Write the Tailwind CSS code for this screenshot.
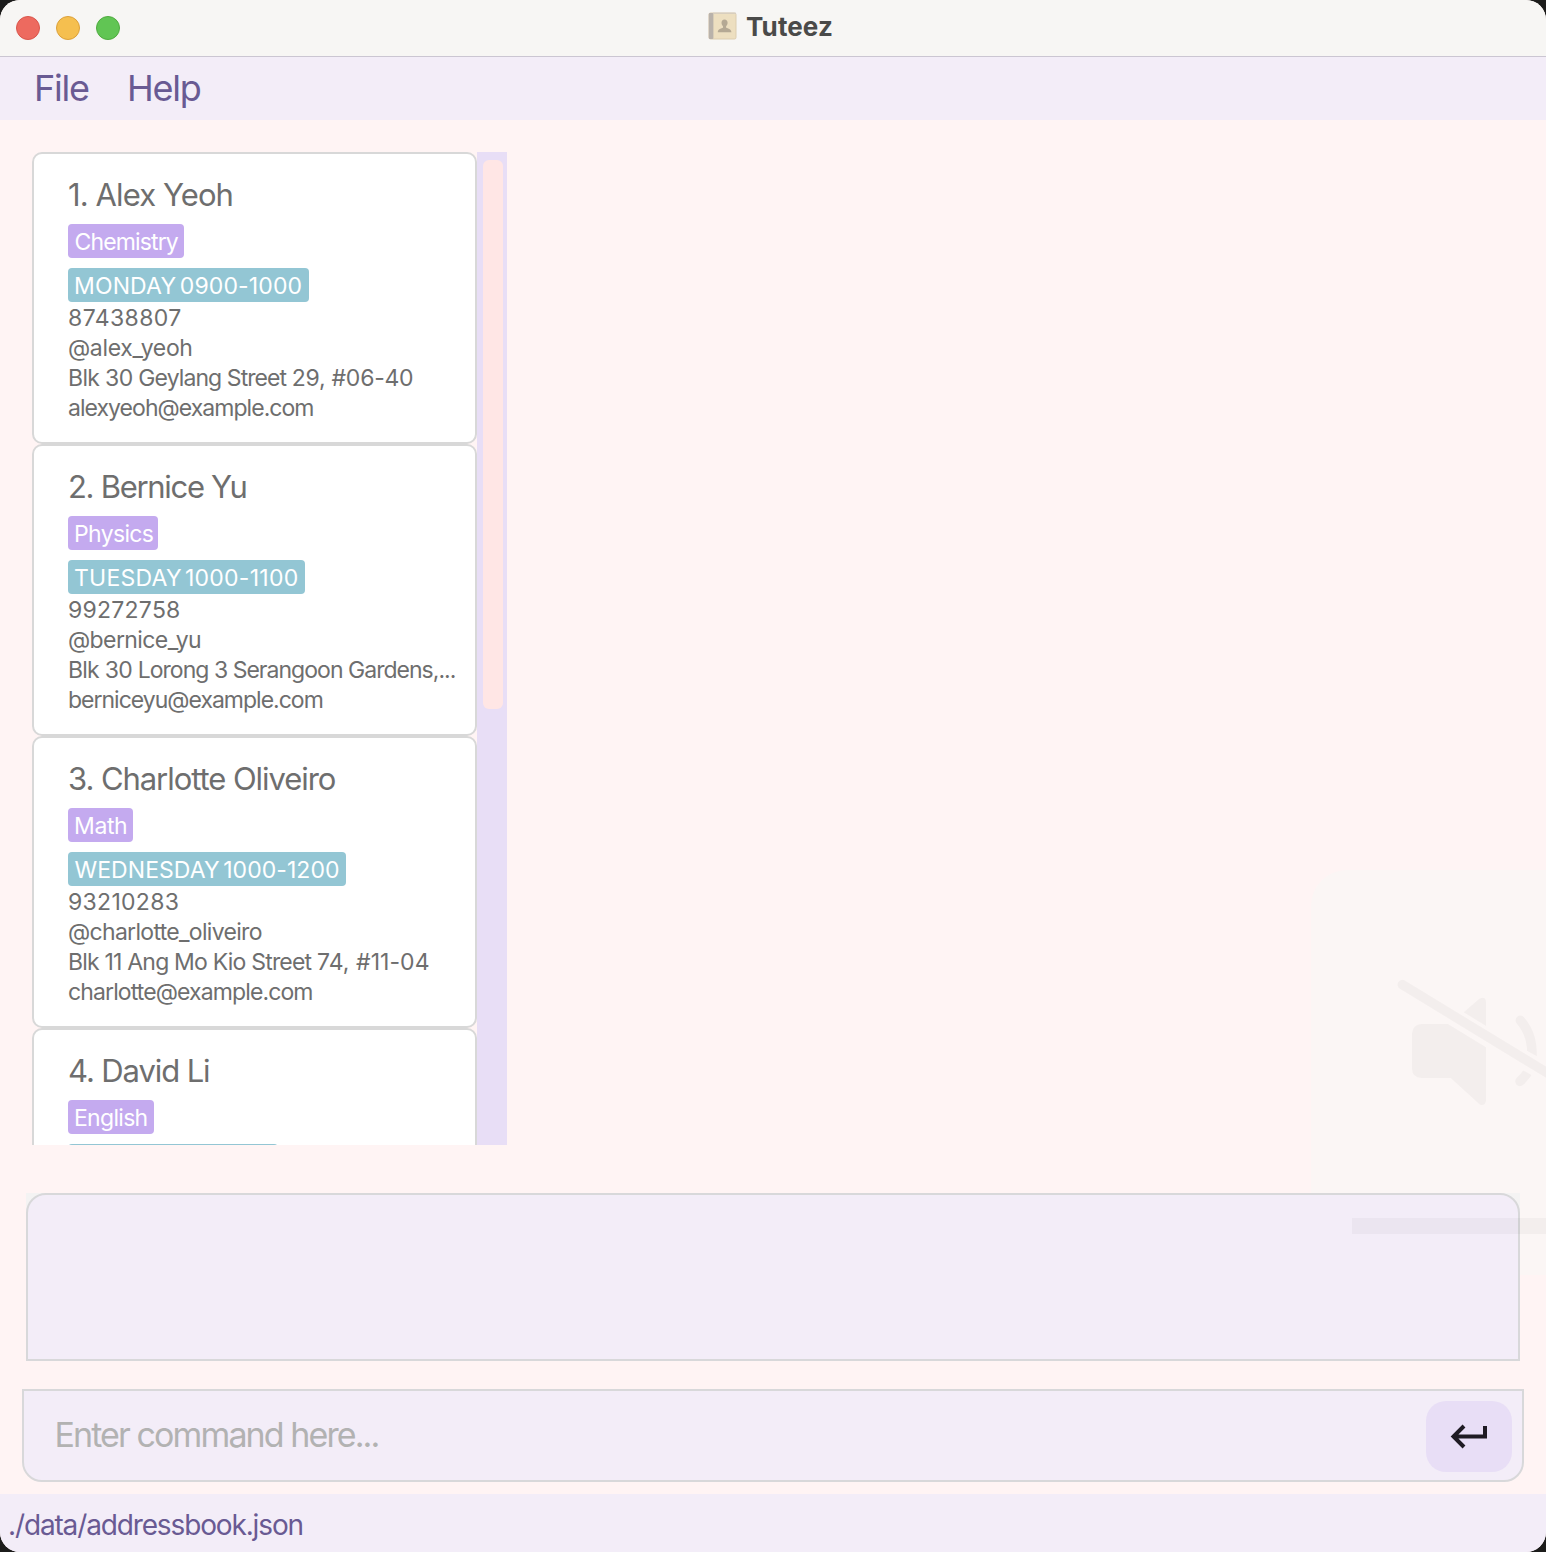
<!DOCTYPE html>
<html lang="en">
<head>
<meta charset="utf-8">
<title>Tuteez</title>
<script src="https://cdn.jsdelivr.net/npm/@tailwindcss/browser@4"></script>
</head>
<body class="bg-[#1c1c1b] font-['Inter',sans-serif]">
<div class="relative isolate flex h-[1552px] w-[1546px] flex-col overflow-hidden rounded-[20px] bg-[#fff4f4] whitespace-nowrap">

  <!-- Title bar -->
  <header class="relative flex h-[57px] shrink-0 items-center border-b border-[#cbc6d2] bg-[#f7f6f4] pl-4">
    <div class="flex gap-4">
      <span class="size-6 rounded-full border border-[#d9564c] bg-[#ed6a5f]"></span>
      <span class="size-6 rounded-full border border-[#dba03a] bg-[#f5bf4f]"></span>
      <span class="size-6 rounded-full border border-[#4fab3f] bg-[#61c554]"></span>
    </div>
    <div class="absolute inset-x-0 top-[10px] flex h-8 items-center justify-center gap-[9px] pr-[5px]">
      <svg class="h-[28px] w-[29px]" viewBox="0 0 29 28">
        <rect x="1" y="1" width="27" height="26" rx="1.5" fill="#eddfc0" stroke="#dccdb0" stroke-width="1"/>
        <rect x="0.8" y="1" width="4.6" height="26" rx="1" fill="#b9b2aa"/>
        <path d="M5 1.2H28" stroke="#d3cbc0" stroke-width="1"/>
        <path d="M16.5 7.500c-2 0-3 1.400-3 3.200 0 1.500.7 2.800 1.500 3.500v1.600c-2.600.8-5.200 1.700-5.200 4.500h13.600c0-2.800-2.700-3.700-5.300-4.500v-1.600c.8-.7 1.500-2 1.500-3.500 0-1.800-1.100-3.200-3.100-3.200z" fill="#b5a994"/>
      </svg>
      <h1 class="pt-[2px] text-[26px] leading-8 font-bold tracking-[0.1px] text-[#4a4a49]">Tuteez</h1>
    </div>
  </header>

  <!-- Menu bar -->
  <nav class="flex h-[63px] shrink-0 gap-[38px] bg-[#f3edf8] pl-[34px] text-[36px] leading-[62px] tracking-[-1.2px] text-[#695a93]">
    <span>File</span>
    <span>Help</span>
  </nav>

  <!-- Person list -->
  <main class="mt-8 ml-8 flex h-[993px] w-[475px] shrink-0 overflow-hidden text-[23px] leading-[30px] text-[#6e6e6e]">
    <div class="w-[445px]">
      <article class="h-[292px] rounded-[10px] border-2 border-[#d8d8d8] bg-white pt-[23px] pl-[34px]">
        <h2 class="mb-[11px] text-[31px] leading-9 tracking-[-0.9px]">1. Alex Yeoh</h2>
        <div class="mb-[10px] h-[34px] w-[116px] rounded bg-[#c4aaef] pl-[6.5px] leading-[36px] tracking-[-0.86px] text-white">Chemistry</div>
        <div class="h-[34px] w-[241px] rounded bg-[#93c6d4] pl-[6px] leading-[36px] tracking-[0.14px] text-white [word-spacing:-3px]">MONDAY 0900-1000</div>
        <div class="pt-px">
          <p class="tracking-[0.4px]">87438807</p>
          <p class="tracking-[-0.35px]">@alex_yeoh</p>
          <p class="tracking-[-0.25px]"><span class="tracking-[-0.65px]">Blk 30 </span><span class="tracking-[-0.92px]">Geylang Street </span>29, #06-40</p>
          <p class="tracking-[-0.96px]">alexyeoh@example.com</p>
        </div>
      </article>
      <article class="h-[292px] rounded-[10px] border-2 border-[#d8d8d8] bg-white pt-[23px] pl-[34px]">
        <h2 class="mb-[11px] text-[31px] leading-9 tracking-[-1.3px]">2. Bernice Yu</h2>
        <div class="mb-[10px] h-[34px] w-[90px] rounded bg-[#c4aaef] pl-[6px] leading-[36px] tracking-[-0.65px] text-white">Physics</div>
        <div class="h-[34px] w-[237px] rounded bg-[#93c6d4] pl-[6px] leading-[36px] tracking-[0.24px] text-white [word-spacing:-3.5px]">TUESDAY 1000-1100</div>
        <div class="pt-px">
          <p class="tracking-[0.25px]">99272758</p>
          <p class="tracking-[-0.6px]">@bernice_yu</p>
          <p class="tracking-[-0.97px]"><span class="tracking-[-0.75px]">Blk 30 </span>Lorong 3 Serangoon Gardens,...</p>
          <p class="tracking-[-1px]">berniceyu@example.com</p>
        </div>
      </article>
      <article class="h-[292px] rounded-[10px] border-2 border-[#d8d8d8] bg-white pt-[23px] pl-[34px]">
        <h2 class="mb-[11px] text-[31px] leading-9 tracking-[-1.06px]">3. Charlotte Oliveiro</h2>
        <div class="mb-[10px] h-[34px] w-[65px] rounded bg-[#c4aaef] pl-[6px] leading-[36px] tracking-[-0.4px] text-white">Math</div>
        <div class="h-[34px] w-[278px] rounded bg-[#93c6d4] pl-[6.5px] leading-[36px] tracking-[0.06px] text-white [word-spacing:-3px]">WEDNESDAY 1000-1200</div>
        <div class="pt-px">
          <p class="tracking-[0.3px]">93210283</p>
          <p class="tracking-[-0.69px]">@charlotte_oliveiro</p>
          <p class="tracking-[0.05px]"><span class="tracking-[-0.8px]">Blk 11 Ang Mo Kio Street </span>74, #11-04</p>
          <p class="tracking-[-0.885px]">charlotte@example.com</p>
        </div>
      </article>
      <article class="h-[292px] rounded-[10px] border-2 border-[#d8d8d8] bg-white pt-[23px] pl-[34px]">
        <h2 class="mb-[11px] text-[31px] leading-9 tracking-[-1.1px]">4. David Li</h2>
        <div class="mb-[10px] h-[34px] w-[86px] rounded bg-[#c4aaef] pl-[6px] leading-[36px] tracking-[-0.7px] text-white">English</div>
        <div class="h-[34px] w-[210px] rounded bg-[#93c6d4]"></div>
      </article>
    </div>
    <div class="w-[30px] bg-[#e8def6] px-[5px] pt-2">
      <div class="ml-px h-[549px] w-5 rounded-md bg-[#ffe6e5]"></div>
    </div>
  </main>

  <!-- Result display -->
  <section class="mt-[48px] ml-[26px] h-[168px] w-[1494px] shrink-0 bg-[#f4f3f3]">
    <div class="h-full rounded-t-[20px] border-2 border-[#d8d8da] bg-[#f3edf8]"></div>
  </section>

  <!-- Command box -->
  <section class="mt-[28px] ml-[22px] flex h-[93px] w-[1502px] shrink-0 items-start justify-between rounded-b-[20px] border-2 border-[#d8d8da] bg-[#f3edf8] pt-[10px] pr-[10px] pl-[30.5px]">
    <span class="pt-[14px] text-[34px] leading-[40px] tracking-[-1.9px] text-[#b2b2b2]">Enter command here...</span>
    <button class="flex h-[71px] w-[86px] items-center justify-center rounded-[20px] bg-[#e8def6]">
      <svg class="h-12 w-[66px]" viewBox="0 0 66 48" fill="none" stroke="#1f1b24" stroke-width="4">
        <path d="M49 13V23.500H17M28 13L17.500 23.500L28 34"/>
      </svg>
    </button>
  </section>

  <!-- Status bar -->
  <footer class="mt-3 flex-1 bg-[#f3edf8] pl-[8px] text-[28px] leading-[62px] tracking-[-1.14px] text-[#695a93]">./data/addressbook.json</footer>

  <!-- Fading volume overlay -->
  <div class="absolute top-[870px] left-[1311px] -z-10 h-[405px] w-[235px] rounded-l-[36px] bg-[#fbf6f5]"></div>
  <svg class="absolute top-[860px] left-[1300px] h-[400px] w-[246px]" viewBox="0 0 738 1200">
    <defs>
      <clipPath id="upper"><path d="M600 400H738V604L682 573L600 528Z"/></clipPath>
      <clipPath id="lower"><path d="M600 591L666 629L738 670V760H600Z"/></clipPath>
    </defs>
    <g fill="#000" fill-opacity=".03">
      <path d="M364 492H444L558 562V722Q556 738 540 734L452 654H364Q336 652 336 626V520Q338 494 364 492Z"/>
      <path d="M491 457L537 417Q556 407 558 425V498Z"/>
      <path d="M156 1074H738V1122H156Z"/>
    </g>
    <g fill="none" stroke="#000" stroke-opacity=".03" stroke-width="29" stroke-linecap="round">
      <path d="M307 374L770 656"/>
      <path d="M661 481C690 515 698 550 696 605" clip-path="url(#upper)"/>
      <path d="M690 627Q676 649 660 664" clip-path="url(#lower)"/>
    </g>
  </svg>
</div>
</body>
</html>
